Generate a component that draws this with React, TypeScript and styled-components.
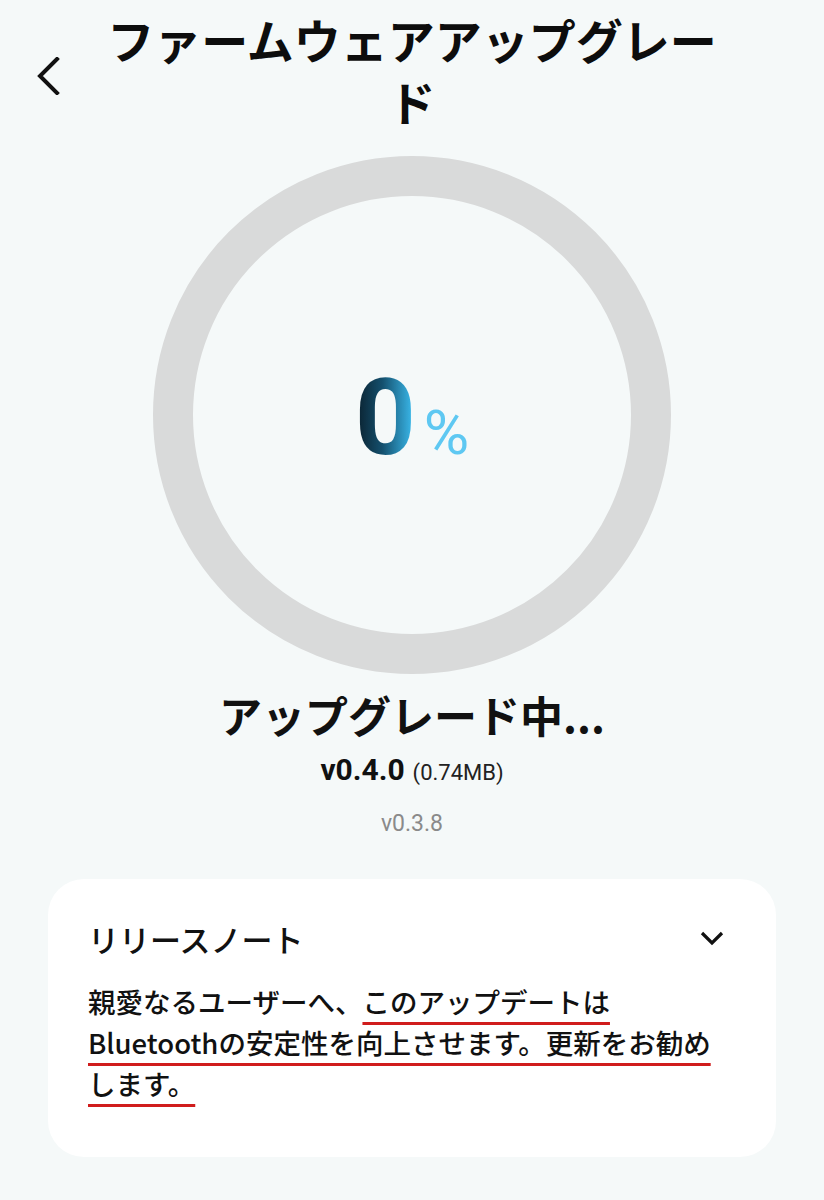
import styled, { createGlobalStyle } from "styled-components";

const GlobalStyle = createGlobalStyle`
  html, body {
    margin: 0;
    padding: 0;
    background: #f5f9f9;
  }
  body {
    font-family: Roboto, "Noto Sans CJK JP", sans-serif;
    color: #111;
  }
`;

const Page = styled.div`
  width: 824px;
  min-height: 1200px;
  display: flex;
  flex-direction: column;
  align-items: center;
  background: #f5f9f9;
`;

const Header = styled.header`
  width: 100%;
  display: grid;
  grid-template-columns: 96px 1fr 96px;
  align-items: start;
  padding-top: 8px;
`;

const BackButton = styled.button`
  border: 0;
  background: none;
  padding: 0;
  margin: 48px 0 0 34px;
  width: 28px;
  height: 40px;
  display: flex;
  align-items: center;
  justify-content: center;
  cursor: pointer;
`;

const Title = styled.h1`
  margin: 0;
  font-family: "Noto Sans CJK JP", sans-serif;
  font-size: 47px;
  font-weight: 700;
  line-height: 62px;
  text-align: center;
  color: #0d0d0d;
`;

const Ring = styled.div`
  margin-top: 24px;
  width: 518px;
  height: 518px;
  box-sizing: border-box;
  border: 40px solid #d9dada;
  border-radius: 50%;
  display: flex;
  align-items: center;
  justify-content: center;
`;

const Percent = styled.div`
  display: flex;
  align-items: baseline;
  gap: 8px;
  margin-top: 6px;
`;

const Digit = styled.span`
  font-family: Roboto, sans-serif;
  font-size: 106px;
  font-weight: 700;
  line-height: 1;
  background: linear-gradient(90deg, #0a1f2c 0%, #14506e 45%, #3ec3f7 100%);
  -webkit-background-clip: text;
  background-clip: text;
  color: transparent;
`;

const Unit = styled.span`
  font-family: Roboto, sans-serif;
  font-size: 62px;
  font-weight: 400;
  color: #5ec8f2;
  line-height: 1;
`;

const Status = styled.h2`
  margin: 10px 0 0;
  font-family: "Noto Sans CJK JP", sans-serif;
  font-size: 43px;
  font-weight: 700;
  line-height: 60px;
  color: #111;
`;

const Version = styled.div`
  margin-top: 8px;
  display: flex;
  align-items: baseline;
  gap: 8px;
  line-height: 36px;
`;

const VersionNew = styled.span`
  font-size: 30px;
  font-weight: 700;
  color: #111;
`;

const Size = styled.span`
  font-size: 22px;
  color: #222;
`;

const VersionOld = styled.div`
  margin-top: 18px;
  font-size: 23px;
  color: #8a8a8a;
  line-height: 30px;
`;

const Card = styled.section`
  margin-top: 40px;
  width: 728px;
  box-sizing: border-box;
  background: #ffffff;
  border-radius: 36px;
  padding: 38px 46px 53px 40px;
`;

const CardHead = styled.div`
  display: flex;
  align-items: center;
  justify-content: space-between;
`;

const CardTitle = styled.h3`
  margin: 0;
  font-family: "Noto Sans CJK JP", sans-serif;
  font-size: 31px;
  font-weight: 500;
  line-height: 44px;
  color: #111;
`;

const Toggle = styled.span`
  display: flex;
  margin-right: 6px;
`;

const Notes = styled.p`
  margin: 20px 0 0;
  font-family: "Noto Sans CJK JP", sans-serif;
  font-size: 27.5px;
  font-weight: 500;
  line-height: 41px;
  color: #111;
`;

const Marked = styled.span`
  text-decoration: underline;
  text-decoration-color: #d01c1c;
  text-decoration-thickness: 3px;
  text-underline-offset: 9px;
`;

export default function App() {
  return (
    <>
      <GlobalStyle />
      <Page>
        <Header>
          <BackButton aria-label="back">
            <svg width="24" height="38" viewBox="0 0 24 38" fill="none">
              <path d="M21 2 L4 19 L21 36" stroke="#111" strokeWidth="4" strokeLinecap="square" />
            </svg>
          </BackButton>
          <Title>ファームウェアアップグレード</Title>
          <div />
        </Header>

        <Ring>
          <Percent>
            <Digit>0</Digit>
            <Unit>%</Unit>
          </Percent>
        </Ring>

        <Status>アップグレード中...</Status>
        <Version>
          <VersionNew>v0.4.0</VersionNew>
          <Size>(0.74MB)</Size>
        </Version>
        <VersionOld>v0.3.8</VersionOld>

        <Card>
          <CardHead>
            <CardTitle>リリースノート</CardTitle>
            <Toggle>
              <svg width="24" height="16" viewBox="0 0 24 16" fill="none">
                <path d="M2 2 L12 12 L22 2" stroke="#111" strokeWidth="3.2" />
              </svg>
            </Toggle>
          </CardHead>
          <Notes>
            親愛なるユーザーへ、<Marked>このアップデートは</Marked>
            <Marked>Bluetoothの安定性を向上させます。更新をお勧めします。</Marked>
          </Notes>
        </Card>
      </Page>
    </>
  );
}
